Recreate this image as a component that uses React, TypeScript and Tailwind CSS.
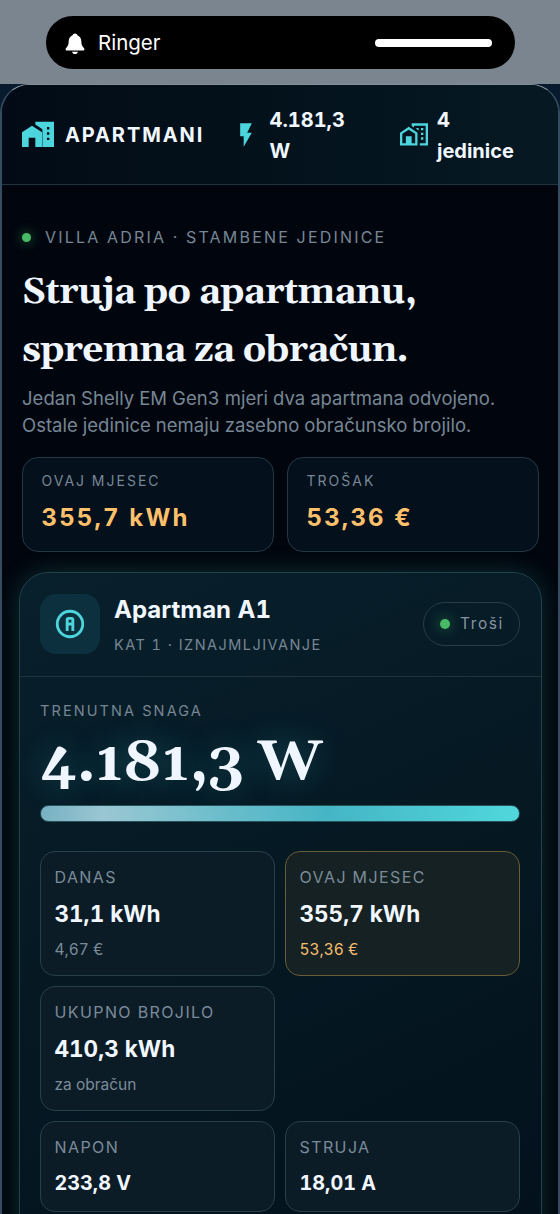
import type { ReactNode } from "react";

type StatProps = {
  label: string;
  value: string;
  note?: string;
  highlight?: boolean;
};

const Icon = ({ d, className }: { d: string; className: string }) => (
  <svg viewBox="0 0 24 24" fill="currentColor" className={className}>
    <path fillRule="evenodd" d={d} />
  </svg>
);

const icons = {
  city: "M10 2V4.1L15.3 7.7V21H24V2H10ZM18.7 6H20.5V7.8H18.7ZM18.7 10H20.5V11.8H18.7ZM18.7 14H20.5V15.8H18.7ZM7.5 5L0 10V21H5V14H10V21H15V10L7.5 5Z",
  cityOutline:
    "M10 2V4.26L12 5.59V4H22V19H17V21H24V2H10M7.5 5L0 10V21H15V10L7.5 5M14 6V6.93L15.61 8H16V6H14M18 6V8H20V6H18M7.5 7.5L13 11V19H10V13H5V19H2V11L7.5 7.5M18 10V12H20V10H18M18 14V16H20V14H18Z",
  flash: "M7 2V13H10V22L17 10H13L17 2H7Z",
  bell: "M12 1.5C10.6 1.5 9.6 2.4 9.4 3.5C6.7 4.5 5.2 6.9 5.1 10C5 13.7 4.3 15.2 3 16.5C2.2 17.3 1.7 18 1.7 18.8C1.7 19.7 2.3 20.2 3.3 20.2H20.7C21.7 20.2 22.3 19.7 22.3 18.8C22.3 18 21.8 17.3 21 16.5C19.7 15.2 19 13.7 18.9 10C18.8 6.9 17.3 4.5 14.6 3.5C14.4 2.4 13.4 1.5 12 1.5ZM8.8 21.5C9.2 23.1 10.4 24 12 24C13.6 24 14.8 23.1 15.2 21.5Z",
  letterA:
    "M11 7H13A2 2 0 0 1 15 9V17H13V13H11V17H9V9A2 2 0 0 1 11 7M11 9V11H13V9H11M12 20A8 8 0 0 0 20 12A8 8 0 0 0 12 4A8 8 0 0 0 4 12A8 8 0 0 0 12 20M12 22A10 10 0 0 1 2 12A10 10 0 0 1 12 2A10 10 0 0 1 22 12A10 10 0 0 1 12 22",
};

const Total = ({ label, value }: { label: string; value: string }) => (
  <div className="h-[95px] rounded-[16px] border border-[#243844] bg-[#04111d] pl-[18.5px] pt-[13px]">
    <div className="text-[14px] leading-[20px] tracking-[2px] text-[#778695]">{label}</div>
    <div className="mt-[9px] text-[24px] leading-[36px] font-bold tracking-[2.15px] text-[#ffc06c]">{value}</div>
  </div>
);

const Stat = ({ label, value, note, highlight }: StatProps) => (
  <div
    className={
      "rounded-[15px] border pl-[13.5px] pt-[13px] " +
      (note ? "h-[125px] " : "h-[91px] ") +
      (highlight ? "border-[#6a5c36] bg-[#152122]" : "border-[#294049] bg-[#0c1c27]")
    }
  >
    <div className="text-[16px] leading-[24px] tracking-[1.4px] text-[#7b8b99]">{label}</div>
    <div
      className={
        "font-bold text-[#f0f7ff] " +
        (note ? "mt-[8px] text-[22.5px] leading-[34px]" : "mt-[10px] text-[19.8px] leading-[28px]")
      }
    >
      {value}
    </div>
    {note && (
      <div className={"mt-[7px] text-[15.5px] leading-[24px] " + (highlight ? "text-[#f5bd6d]" : "text-[#7b8b99]")}>
        {note}
      </div>
    )}
  </div>
);

const Label = ({ children }: { children: ReactNode }) => (
  <div className="text-[14.5px] leading-[20px] tracking-[2.1px] text-[#778695]">{children}</div>
);

export default function App() {
  return (
    <div className="h-[1214px] w-[560px] overflow-hidden bg-[#081b2e] font-['Inter',sans-serif] tabular-nums">
      <div className="h-[84px] bg-[#7b858f] pr-[45px] pl-[46px] pt-[16px]">
        <div className="flex h-[53px] items-center rounded-full bg-black pl-[18px] pr-[23px] text-white">
          <Icon d={icons.bell} className="h-[22px] w-[22px]" />
          <span className="ml-[12px] pt-px text-[20.5px]">Ringer</span>
          <span className="ml-auto h-[8px] w-[117px] rounded-full bg-white" />
        </div>
      </div>

      <main className="h-[1160px] overflow-hidden rounded-t-[29px] border-2 border-t border-[#354b60] border-t-[#83909b] bg-[#01060e]">
        <header className="flex h-[100px] items-center border-b border-[#20333e] bg-linear-to-r from-[#020b15] to-[#061923] text-[#f0f7ff]">
          <Icon d={icons.city} className="ml-[19.5px] h-[32px] w-[32px] text-[#4dd5dd]" />
          <span className="ml-[11.5px] w-[167px] text-[20px] font-bold tracking-[1.9px]">APARTMANI</span>
          <Icon d={icons.flash} className="h-[28px] w-[28px] text-[#4dd5dd]" />
          <span className="ml-[9.5px] w-[130px] pt-[2px] text-[20px] leading-[31px] font-bold">
            4.181,3
            <br />W
          </span>
          <Icon d={icons.cityOutline} className="h-[28px] w-[28px] text-[#4dd5dd]" />
          <span className="ml-[9.5px] pt-[2px] text-[20px] leading-[31px] font-bold">
            4<br />
            jedinice
          </span>
        </header>

        <section className="pt-[40px] pr-[19px] pl-[20px]">
          <div className="flex items-center text-[16px] leading-[24px] tracking-[2.2px] text-[#778695]">
            <span className="mr-[14px] h-[9px] w-[9px] rounded-full bg-[#48ba66] shadow-[0_0_12px_#48ba6699]" />
            VILLA ADRIA · STAMBENE JEDINICE
          </div>
          <h1 className="mt-[15px] font-[Gelasio,Georgia,'DejaVu_Serif',serif] text-[37px] leading-[58px] font-bold tracking-[-0.75px] whitespace-nowrap text-[#f0f6ff]">
            Struja po apartmanu,
            <br />
            spremna za obračun.
          </h1>
          <p className="mt-[5px] text-[18.5px] leading-[27px] tracking-[0.02px] whitespace-nowrap text-[#778695]">
            Jedan Shelly EM Gen3 mjeri dva apartmana odvojeno.
            <br />
            Ostale jedinice nemaju zasebno obračunsko brojilo.
          </p>
          <div className="mt-[18px] grid grid-cols-2 gap-[13px]">
            <Total label="OVAJ MJESEC" value="355,7 kWh" />
            <Total label="TROŠAK" value="53,36 €" />
          </div>
        </section>

        <section className="mr-[16px] ml-[17px] mt-[20px] h-[720px] rounded-[29px] border border-[#1f424b] bg-linear-155 from-[#08202c] via-[#051822] to-[#03101c] shadow-[0_0_24px_#2d828050]">
          <div className="flex h-[104px] items-center border-b border-[#20343e] pr-[21px] pb-px pl-[20px]">
            <div className="flex h-[60px] w-[60px] items-center justify-center rounded-[16px] bg-[#0d303f]">
              <Icon d={icons.letterA} className="h-[34px] w-[34px] text-[#4dd5dd]" />
            </div>
            <div className="ml-[14px]">
              <h2 className="text-[24px] leading-[34px] font-bold text-[#f0f7ff]">Apartman A1</h2>
              <div className="mt-[7px] text-[14.5px] leading-[22px] tracking-[1.45px] text-[#778695]">
                KAT 1 · IZNAJMLJIVANJE
              </div>
            </div>
            <div className="ml-auto flex h-[44px] w-[97px] items-center rounded-full border border-[#263d47] pl-[16px] text-[15.5px] tracking-[1.6px] text-[#8695a1]">
              <span className="mr-[10px] h-[10px] w-[10px] rounded-full bg-[#48ba66] shadow-[0_0_14px_#48ba6699]" />
              Troši
            </div>
          </div>

          <div className="pr-[21px] pl-[20px] pt-[24px]">
            <Label>TRENUTNA SNAGA</Label>
            <div className="mt-[9px] h-[66px] font-[Gelasio,Georgia,'DejaVu_Serif',serif] text-[57px] leading-[66px] font-bold tracking-[-0.1px] whitespace-nowrap proportional-nums text-[#f0f6ff] [text-shadow:0_0_32px_#39bdcd55]">
              4.181,3 W
            </div>
            <div className="mt-[9px] h-[17px] rounded-full border border-[#28515a] bg-[linear-gradient(90deg,#78b1c2_0%,#9ac7d3_13%,#45b5c5_60%,#50d8dd_100%)]" />
            <div className="mt-[29px] grid grid-cols-2 gap-[10px]">
              <Stat label="DANAS" value="31,1 kWh" note="4,67 €" />
              <Stat label="OVAJ MJESEC" value="355,7 kWh" note="53,36 €" highlight />
              <Stat label="UKUPNO BROJILO" value="410,3 kWh" note="za obračun" />
              <div />
              <Stat label="NAPON" value="233,8 V" />
              <Stat label="STRUJA" value="18,01 A" />
            </div>
          </div>
        </section>
      </main>
    </div>
  );
}
